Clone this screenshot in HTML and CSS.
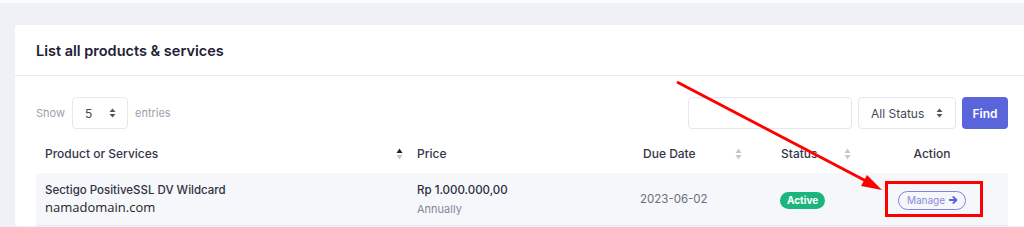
FILE: index.html
```html
<!DOCTYPE html>
<html lang="en">
<head>
<meta charset="utf-8">
<title>Products &amp; Services</title>
<link rel="stylesheet" href="styles.css">
</head>
<body>
<div class="page">
  <div class="card">
    <div class="card-header">List all products &amp; services</div>
    <div class="card-body">
      <div class="controls">
        <div class="length">
          <span class="muted">Show</span>
          <div class="select small"><span>5</span><span class="updown"><svg width="7" height="10" viewBox="0 0 7 10"><path d="M3.5 0.5 L6.5 4 H0.5Z M3.5 9.5 L6.5 6 H0.5Z" fill="#555"/></svg></span></div>
          <span class="muted">entries</span>
        </div>
        <div class="filters">
          <div class="input search"></div>
          <div class="select status"><span>All Status</span><span class="updown"><svg width="7" height="10" viewBox="0 0 7 10"><path d="M3.5 0.5 L6.5 4 H0.5Z M3.5 9.5 L6.5 6 H0.5Z" fill="#555"/></svg></span></div>
          <button class="btn-find">Find</button>
        </div>
      </div>
      <div class="table">
        <div class="thead">
          <div class="th c1"><span>Product or Services</span><span class="sort"><svg width="7" height="12" viewBox="0 0 7 12"><path d="M3.5 0.5 L6.5 5 H0.5Z" fill="#222"/><path d="M3.5 11.5 L6.5 7 H0.5Z" fill="#c6c7cf"/></svg></span></div>
          <div class="th c2"><span>Price</span></div>
          <div class="th c3"><span>Due Date</span><span class="sort"><svg width="7" height="12" viewBox="0 0 7 12"><path d="M3.5 0.5 L6.5 5 H0.5Z M3.5 11.5 L6.5 7 H0.5Z" fill="#c6c7cf"/></svg></span></div>
          <div class="th c4"><span>Status</span><span class="sort"><svg width="7" height="12" viewBox="0 0 7 12"><path d="M3.5 0.5 L6.5 5 H0.5Z M3.5 11.5 L6.5 7 H0.5Z" fill="#c6c7cf"/></svg></span></div>
          <div class="th c5"><span>Action</span></div>
        </div>
        <div class="tr">
          <div class="td c1">
            <div class="prod-name">Sectigo PositiveSSL DV Wildcard</div>
            <div class="domain">namadomain.com</div>
          </div>
          <div class="td c2">
            <div class="price">Rp 1.000.000,00</div>
            <div class="cycle">Annually</div>
          </div>
          <div class="td c3 date">2023-06-02</div>
          <div class="td c4"><span class="badge">Active</span></div>
          <div class="td c5"><span class="manage">Manage <svg width="9" height="8" viewBox="0 0 9 8"><path d="M0.5 4 H7 M4.3 1 L7.5 4 L4.3 7" stroke="#5b64d9" stroke-width="1.8" fill="none" stroke-linecap="round" stroke-linejoin="round"/></svg></span></div>
        </div>
      </div>
    </div>
  </div>
</div>
<svg class="annotation" width="1024" height="227" viewBox="0 0 1024 227">
  <line x1="677" y1="82" x2="866" y2="181" stroke="#f00" stroke-width="3"/>
  <path d="M882 190 L861 186 L867 175 Z" fill="#f00"/>
  <rect x="886.5" y="182.5" width="95" height="33" fill="none" stroke="#f00" stroke-width="3"/>
</svg>
</body>
</html>
```
FILE: styles.css
```css
* { box-sizing: border-box; }
html, body { margin: 0; padding: 0; }
body {
  background: #f0f1f7;
  font-family: "Inter", "Liberation Sans", sans-serif;
  color: #2b2d3b;
  position: relative;
  width: 1024px;
  height: 227px;
  overflow: hidden;
}
.page {
  border-top: 3px solid #fbfbfd;
  padding: 22px 0 0 15px;
}
.card {
  background: #fff;
  border-radius: 4px;
  width: 1030px;
}
.card-header {
  height: 51px;
  display: flex;
  align-items: center;
  padding-left: 21px;
  font-size: 14.5px;
  font-weight: 600;
  color: #1e2135;
  border-bottom: 1px solid #e9eaf0;
}
.card-body {
  padding: 21px 22px 0 21px;
}
.controls {
  display: flex;
  justify-content: space-between;
  align-items: center;
  width: 972px;
  height: 32px;
}
.length {
  display: flex;
  align-items: center;
  gap: 7px;
  font-size: 11px;
}
.muted { color: #9c9eb0; }
.select, .input {
  height: 32px;
  border: 1px solid #e6e7ee;
  border-radius: 4px;
  display: flex;
  align-items: center;
  justify-content: space-between;
  font-size: 12px;
  color: #44475a;
  background: #fff;
}
.select.small { width: 56px; padding: 0 11px 0 12px; }
.updown { display: flex; align-items: center; }
.filters { display: flex; gap: 6px; }
.search { width: 164px; }
.status { width: 98px; padding: 0 12px 0 12px; }
.btn-find {
  width: 46px;
  height: 32px;
  border: 0;
  border-radius: 4px;
  background: #5a65dc;
  color: #fff;
  font-family: inherit;
  font-size: 12px;
  font-weight: 600;
}
.table { width: 972px; margin-top: 8px; }
.thead, .tr {
  display: grid;
  grid-template-columns: 373px 223px 116px 108px 152px;
}
.thead { height: 36px; padding-bottom: 3px; }
.th {
  display: flex;
  align-items: center;
  font-size: 12px;
  font-weight: 500;
  color: #33364a;
}
.sort { margin-left: auto; display: flex; }
.th.c1 { padding: 0 6px 0 9px; }
.th.c2 { padding-left: 8px; }
.th.c3 { padding: 0 6px 0 11px; }
.th.c4 { padding: 0 5px 0 33px; }
.th.c5 { justify-content: center; }
.tr {
  height: 53px;
  background: #f6f7fa;
  border-bottom: 1px solid #e9eaf0;
}
.td { display: flex; flex-direction: column; justify-content: center; }
.td.c1 { padding-left: 9px; }
.td.c2 { padding-left: 8px; padding-top: 2px; }
.td.c3 { padding-left: 8px; }
.td.c4 { padding-left: 32px; align-items: flex-start; }
.td.c5 { align-items: center; }
.prod-name { font-size: 11.5px; font-weight: 500; color: #2f3244; line-height: 16px; }
.domain { font-family: "Open Sans", "DejaVu Sans", sans-serif; font-size: 13px; color: #1d1d1d; line-height: 19px; }
.price { font-size: 11.5px; font-weight: 500; color: #2a2d3e; line-height: 18px; }
.cycle { font-size: 11px; color: #85889a; line-height: 21px; }
.date { font-size: 11.5px; color: #6b6e80; }
.badge {
  display: inline-block;
  background: #1cb57e;
  color: #fff;
  font-size: 10px;
  font-weight: 700;
  height: 17px;
  line-height: 17px;
  padding: 0 7px;
  border-radius: 9px;
  margin-top: 3px;
}
.manage {
  display: inline-flex;
  align-items: center;
  gap: 4px;
  height: 19px;
  padding: 0 7px 0 8px;
  border: 1px solid #7d85e2;
  border-radius: 10px;
  font-size: 10px;
  color: #868cd8;
  margin-top: 2px;
}
.annotation {
  position: absolute;
  left: 0;
  top: 0;
  pointer-events: none;
}
```
